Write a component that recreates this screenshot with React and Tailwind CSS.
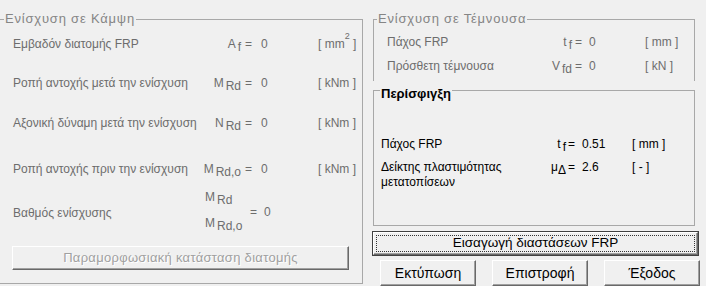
import React from 'react';

const lbl = 'text-[12px] text-[#6d6d6d]';

function Sym({ main, sub }) {
  return (
    <span>
      {main}
      <span className="ml-[2px] align-[-3px]">{sub}</span>
    </span>
  );
}

function WinButton({ children, className = '' }) {
  return (
    <div
      className={`flex items-center justify-center bg-[#f0f0f0] border border-t-white border-l-white border-r-[#696969] border-b-[#696969] shadow-[inset_-1px_-1px_0_#a0a0a0] ${className}`}
    >
      {children}
    </div>
  );
}

// one line of the "Κάμψη" group
function LeftRow({ label, main, sub, value, unit, className = '' }) {
  return (
    <div className={`flex items-baseline h-[20px] leading-[20px] pl-[14px] ${lbl} ${className}`}>
      <span className="w-[190px]">{label}</span>
      <span className="w-[38px] text-right">
        <Sym main={main} sub={sub} />
      </span>
      <span className="w-[20px] pl-[4px]">=</span>
      <span className="w-[57px]">{value}</span>
      <span>{unit}</span>
    </div>
  );
}

export default function App() {
  return (
    <div className="w-[706px] h-[286px] overflow-hidden bg-[#f0f0f0] font-['Liberation_Sans',Arial,sans-serif] flex gap-[10px] pt-[12px]">
      {/* Ενίσχυση σε Κάμψη */}
      <fieldset className="-ml-[2px] w-[365px] h-[272px] shrink-0 border border-[#a8a8a8] flex flex-col">
        <legend className="ml-[5px] px-[1px] text-[13px] leading-[14px] tracking-[0.8px] text-[#858585]">
          Ενίσχυση σε Κάμψη
        </legend>

        <LeftRow
          className="mt-[8px]"
          label="Εμβαδόν διατομής FRP"
          main="A"
          sub="f"
          value="0"
          unit={
            <>
              [ mm<sup className="text-[9px] align-[5px]">2</sup> ]
            </>
          }
        />
        <LeftRow className="mt-[19px]" label="Ροπή αντοχής μετά την ενίσχυση" main="M" sub="Rd" value="0" unit="[ kNm ]" />
        <LeftRow className="mt-[20px]" label="Αξονική δύναμη μετά την ενίσχυση" main="N" sub="Rd" value="0" unit="[ kNm ]" />
        <LeftRow className="mt-[26px]" label="Ροπή αντοχής πριν την ενίσχυση" main="M" sub="Rd,o" value="0" unit="[ kNm ]" />

        {/* Βαθμός ενίσχυσης */}
        <div className={`mt-[13px] h-[40px] flex items-center pl-[14px] ${lbl}`}>
          <span className="w-[190px] pt-[1px]">Βαθμός ενίσχυσης</span>
          <span className="w-[44px] pl-[2px] flex flex-col leading-[15px]">
            <Sym main="M" sub="Rd" />
            <span className="mt-[8px]">
              <Sym main="M" sub="Rd,o" />
            </span>
          </span>
          <span className="w-[17px] pl-[3px]">=</span>
          <span>0</span>
        </div>

        <WinButton className="mt-[14px] ml-[13px] w-[337px] h-[24px]">
          <span className="text-[13px] tracking-[0.3px] text-[#a0a0a0] [text-shadow:1px_1px_0_#fff]">
            Παραμορφωσιακή κατάσταση διατομής
          </span>
        </WinButton>
      </fieldset>

      {/* right column */}
      <div className="w-[327px] flex flex-col">
        <fieldset className="w-[322px] h-[69px] border border-b-0 border-[#a8a8a8]">
          <legend className="ml-[3px] px-[1px] text-[13px] leading-[14px] tracking-[0.8px] text-[#858585]">
            Ενίσχυση σε Τέμνουσα
          </legend>
          <div className={`mt-[6px] h-[20px] leading-[20px] flex items-baseline pl-[13px] ${lbl}`}>
            <span className="w-[158px]">Πάχος FRP</span>
            <span className="w-[27px] text-right">
              <Sym main="t" sub="f" />
            </span>
            <span className="w-[17px] pl-[3px]">=</span>
            <span className="w-[56px]">0</span>
            <span>[ mm ]</span>
          </div>
          <div className={`mt-[4px] h-[20px] leading-[20px] flex items-baseline pl-[13px] ${lbl}`}>
            <span className="w-[158px]">Πρόσθετη τέμνουσα</span>
            <span className="w-[27px] text-right">
              <Sym main="V" sub="fd" />
            </span>
            <span className="w-[17px] pl-[3px]">=</span>
            <span className="w-[56px]">0</span>
            <span>[ kN ]</span>
          </div>
        </fieldset>

        {/* Περίσφιγξη */}
        <fieldset className="w-[322px] h-[146px] border border-[#a8a8a8]">
          <legend className="ml-[6px] px-[1px] pt-[5px] text-[13px] leading-[15px] font-bold text-black">
            Περίσφιγξη
          </legend>
          <div className="mt-[33px] h-[20px] leading-[20px] flex items-baseline pl-[7px] text-[12px] text-black">
            <span className="w-[159px]">Πάχος FRP</span>
            <span className="w-[26px] text-right">
              <Sym main="t" sub="f" />
            </span>
            <span className="w-[16px] pl-[2px]">=</span>
            <span className="w-[50px]">0.51</span>
            <span>[ mm ]</span>
          </div>
          <div className="mt-[6px] flex items-baseline pl-[7px] text-[12px] leading-[15px] text-black">
            <span className="w-[159px]">
              Δείκτης πλαστιμότητας
              <br />
              μετατοπίσεων
            </span>
            <span className="w-[26px] text-right">
              μ<span className="align-[-3px]">Δ</span>
            </span>
            <span className="w-[16px] pl-[2px]">=</span>
            <span className="w-[50px]">2.6</span>
            <span>[ - ]</span>
          </div>
        </fieldset>

        {/* default button */}
        <div className="mt-[5px] -ml-px w-[327px] h-[25px] border border-[#404040]">
          <WinButton className="h-full p-[2px]">
            <div className="w-full h-full flex items-center justify-center outline-1 outline-dotted outline-[#333] -outline-offset-1 text-[13.5px] text-black">
              Εισαγωγή διαστάσεων FRP
            </div>
          </WinButton>
        </div>

        <div className="mt-[4px] ml-[7px] flex gap-[16px]">
          <WinButton className="w-[96px] h-[26px] text-[14px] text-black">Εκτύπωση</WinButton>
          <WinButton className="w-[96px] h-[26px] text-[14px] text-black">Επιστροφή</WinButton>
          <WinButton className="w-[96px] h-[26px] text-[14px] text-black">Έξοδος</WinButton>
        </div>
      </div>
    </div>
  );
}
